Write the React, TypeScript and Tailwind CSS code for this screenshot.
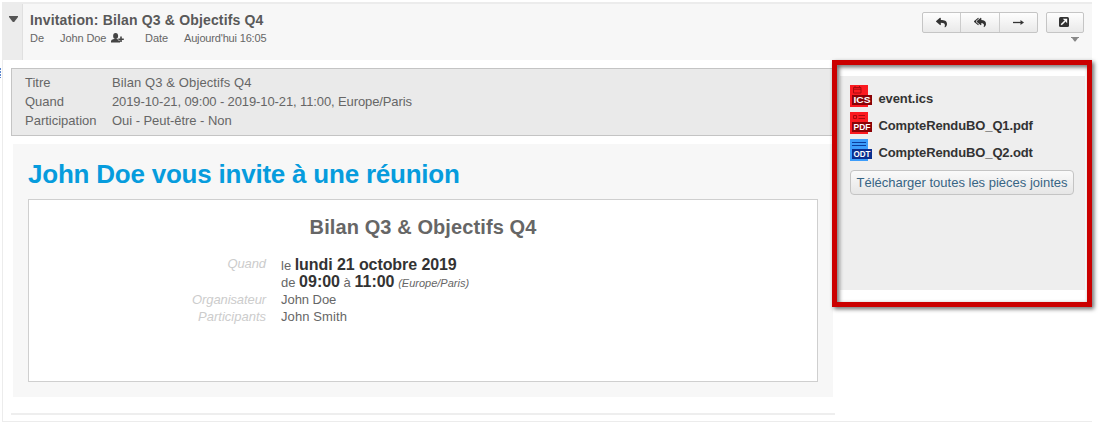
import React from "react";
import { FaReply, FaReplyAll } from "react-icons/fa";

type FileKind = "ICS" | "PDF" | "ODT";

function FileIcon({ kind }: { kind: FileKind }) {
  const blue = kind === "ODT";
  const main = blue ? "#3c9dfb" : "#fb1a20";
  const dark = blue ? "#0b2f8f" : "#8a0206";
  const line = blue ? "#0b3c9c" : "#a80a0e";
  return (
    <svg width="22" height="22" viewBox="0 0 22 22" className="shrink-0">
      <rect width="18" height="22" fill={main} />
      {kind === "ICS" && (
        <path d="M3.5 2.5H11V8H3.5ZM3.5 4.2H11M5 1V3M9.5 1V3" fill="none" stroke={line} strokeWidth="1" />
      )}
      {kind === "PDF" && (
        <path d="M3.5 3.5H6.5V6.5H3.5ZM8.5 3.5H15M8.5 6.5H15" fill="none" stroke={line} strokeWidth="1" />
      )}
      {kind === "ODT" && <path d="M2 3.5H16M2 6.5H16" stroke={line} strokeWidth="1" />}
      <rect x="2" y="10" width="20" height="10" fill={dark} />
      <text
        x="12"
        y="18"
        textAnchor="middle"
        textLength="17"
        lengthAdjust="spacingAndGlyphs"
        fontFamily="Liberation Sans, sans-serif"
        fontWeight="700"
        fontSize="8.6"
        fill="#fff"
      >
        {kind}
      </text>
    </svg>
  );
}

function Attachment({ kind, name }: { kind: FileKind; name: string }) {
  return (
    <li className="flex h-[27px] items-start gap-[6.5px]">
      <FileIcon kind={kind} />
      <span className="pt-[5px] text-[13px] leading-[18px] font-bold tracking-[-0.12px] text-[#333]">{name}</span>
    </li>
  );
}

function UserPlusIcon() {
  return (
    <svg width="13" height="10" viewBox="0 0 13 10" className="mt-px mr-[21px]">
      <ellipse cx="4.6" cy="3" rx="2.5" ry="3" fill="#444" />
      <path d="M0 9.5V8Q0 6.4 3 6H6.2Q7 6 7.3 7.6H9V9.5Z" fill="#444" />
      <path d="M7.3 6.2H12.8M10 3.6V9" stroke="#444" strokeWidth="1.6" />
    </svg>
  );
}

export default function App() {
  return (
    <div className="relative h-[422px] w-[1100px] overflow-hidden bg-white pt-[2px] pl-[2px] font-['Liberation_Sans',sans-serif] whitespace-nowrap text-[#666]">
      <div className="absolute top-[68px] left-0 flex w-[1px] flex-col gap-px">
        <i className="h-[2px] bg-[#5b86cf]" />
        <i className="h-[2px] bg-[#5b86cf]" />
        <i className="h-[2px] bg-[#5b86cf]" />
        <i className="h-px bg-[#5b86cf]" />
      </div>
      <main className="h-[420px] w-[1090px] border-b border-l border-[#ececec]">
        <header className="-ml-px flex h-[58px] border-t-2 border-[#ececec] bg-[#f7f7f7]">
          <div className="flex w-[21px] shrink-0 justify-center border-r border-[#e0e0e0] bg-[#ececec] pt-[12px] pl-[3px]">
            <svg width="9" height="6"><path d="M0 0H9V1L5.2 6H3.8L0 1Z" fill="#555" /></svg>
          </div>
          <div className="w-[892px] pl-[7px]">
            <h1 className="h-[25px] pt-[7px] text-[14px] leading-[18px] font-bold tracking-[0.16px] text-[#595959]">
              Invitation: Bilan Q3 &amp; Objectifs Q4
            </h1>
            <div className="flex h-[16px] items-center pt-px text-[11px] leading-[14px]">
              <span className="w-[30px]">De</span>
              <span className="w-[51px] tracking-[-0.1px]">John Doe</span>
              <UserPlusIcon />
              <span className="w-[39px]">Date</span>
              <span className="tracking-[-0.17px]">Aujourd'hui 16:05</span>
            </div>
          </div>
          <div className="flex flex-1 flex-col pt-[8px] pl-[7px]">
            <div className="flex h-[21px] gap-[8px] text-[#333]">
              <div className="flex w-[116px] divide-x divide-[#ccc] rounded-[2px] border border-[#c5c5c5] bg-linear-to-b from-[#fefefe] to-[#e9e9e9]">
                <span className="flex flex-1 items-center justify-center pb-px"><FaReply className="h-[11px] w-[11px]" /></span>
                <span className="flex flex-1 items-center justify-center pb-px"><FaReplyAll className="h-[11px] w-[12px]" /></span>
                <span className="flex flex-1 items-center justify-center">
                  <svg width="11" height="7"><path d="M0 3.5H8" stroke="#333" strokeWidth="1.3" /><path d="M7.5 1L11 3.5L7.5 6Z" fill="#333" /></svg>
                </span>
              </div>
              <div className="flex w-[38px] items-center justify-center rounded-[2px] border border-[#c5c5c5] bg-linear-to-b from-[#fefefe] to-[#e9e9e9] pr-[2px] pb-px">
                <svg width="10" height="10">
                  <rect width="10" height="10" rx="1.5" fill="#333" />
                  <path d="M2.2 7.8L6 4" stroke="#fff" strokeWidth="1.6" />
                  <path d="M3.8 1.8H8.2V6.2Z" fill="#fff" />
                </svg>
              </div>
            </div>
            <svg width="8" height="5" className="mt-[4px] ml-[149px]"><path d="M0 0H8V1H0ZM1 1H7L4.5 4.5H3.5Z" fill="#888" /></svg>
          </div>
        </header>
        <div className="flex pl-[8px]">
          <section className="w-[824px] pt-[8px]">
            <dl className="grid h-[68px] w-[822px] grid-cols-[87px_1fr] content-start border border-[#c4c4c4] bg-[#eaeaea] pt-[5px] pl-[13px] text-[13px] leading-[18.8px]">
              <dt>Titre</dt><dd className="tracking-[0.1px]">Bilan Q3 &amp; Objectifs Q4</dd>
              <dt>Quand</dt><dd className="tracking-[-0.11px]">2019-10-21, 09:00 - 2019-10-21, 11:00, Europe/Paris</dd>
              <dt>Participation</dt><dd className="tracking-[-0.05px]">Oui - Peut-être - Non</dd>
            </dl>
            <article className="mt-[8px] ml-[2px] h-[253px] w-[820px] bg-[#f7f7f7] px-[15px]">
              <h2 className="h-[55px] pt-[14px] text-[26px] leading-[32px] font-bold tracking-[-0.22px] text-[#069cdd]">
                John Doe vous invite à une réunion
              </h2>
              <div className="h-[183px] border border-[#cfcfcf] bg-white">
                <h3 className="h-[55px] pt-[15px] text-center text-[20px] leading-[24px] font-bold tracking-[0.1px] text-[#666]">
                  Bilan Q3 &amp; Objectifs Q4
                </h3>
                <dl className="grid grid-cols-[237px_1fr] gap-x-[15px] text-[13px] leading-[17px]">
                  <dt className="text-right tracking-[-0.1px] text-[#ccc] italic">Quand</dt>
                  <dd className="h-[36px]">
                    <div className="h-[17px] leading-[20px]">le <b className="text-[16px] tracking-[-0.08px] text-[#333]">lundi 21 octobre 2019</b></div>
                    <div className="h-[18px] leading-[20px]">de <b className="text-[16px] text-[#333]">09:00</b> à <b className="text-[16px] text-[#333]">11:00</b> <i className="text-[11px]">(Europe/Paris)</i></div>
                  </dd>
                  <dt className="text-right tracking-[-0.1px] text-[#ccc] italic">Organisateur</dt><dd className="tracking-[-0.05px]">John Doe</dd>
                  <dt className="text-right text-[#ccc] italic">Participants</dt><dd className="tracking-[0.1px]">John Smith</dd>
                </dl>
              </div>
            </article>
            <div className="mt-[16px] h-[2px] bg-[#eee]" />
          </section>
          <aside className="mt-[16px] ml-[5px] h-[214px] w-[245px] bg-[#eee] pt-[9px] pl-[10px]">
            <ul>
              <Attachment kind="ICS" name="event.ics" />
              <Attachment kind="PDF" name="CompteRenduBO_Q1.pdf" />
              <Attachment kind="ODT" name="CompteRenduBO_Q2.odt" />
            </ul>
            <button className="mt-[4px] flex h-[25px] w-[224px] items-center justify-center rounded-[4px] border border-[#c4c4c4] bg-linear-to-b from-[#fafafa] to-[#e6e6e6] text-[13px] text-[#376484]">
              Télécharger toutes les pièces jointes
            </button>
          </aside>
        </div>
      </main>
      <div className="pointer-events-none absolute top-[60px] left-[832px] h-[247px] w-[260px] border-[5px] border-[#cb0000] drop-shadow-[2px_2px_2px_rgba(0,0,0,0.6)]" />
    </div>
  );
}
